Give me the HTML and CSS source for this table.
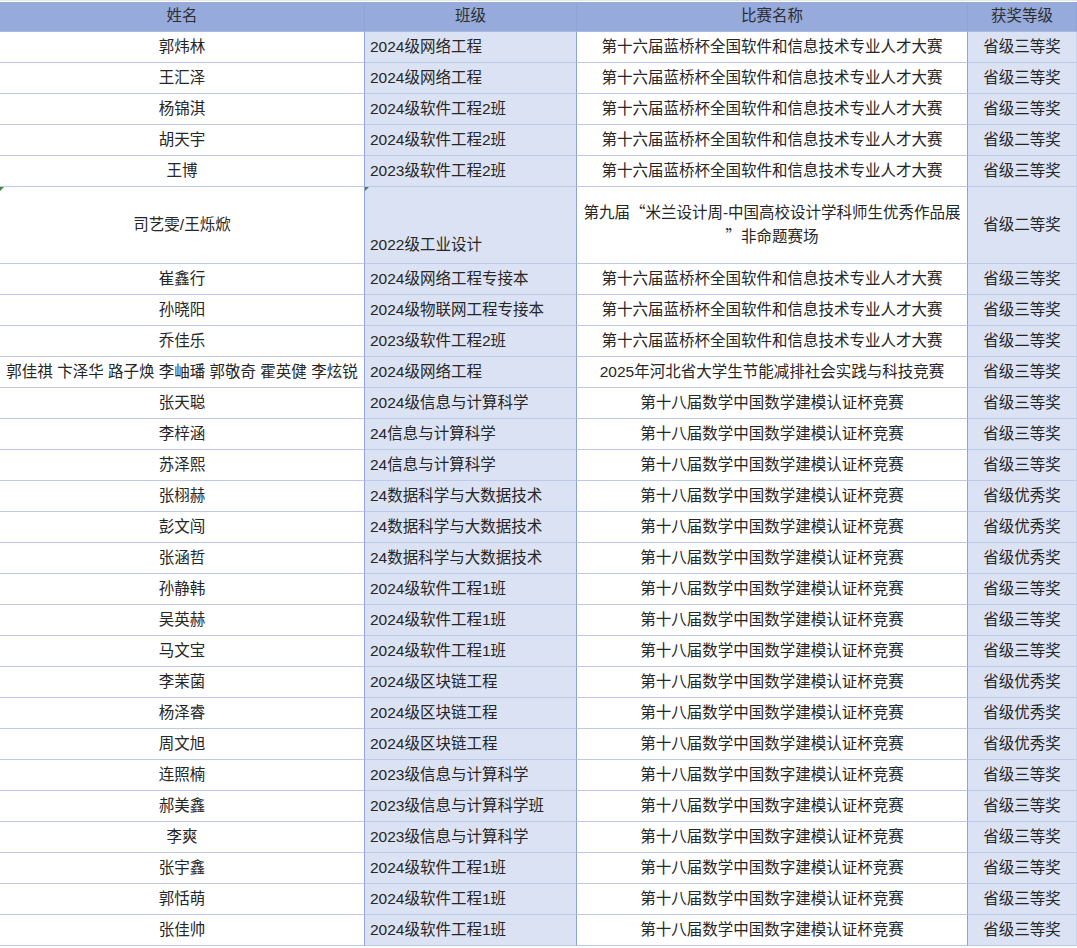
FILE: index.html
```html
<!DOCTYPE html>
<html lang="zh">
<head>
<meta charset="utf-8">
<title>获奖名单</title>
<link rel="stylesheet" href="styles.css">
</head>
<body>
<div class="sheet">
  <div class="cell head">姓名</div>
  <div class="cell head">班级</div>
  <div class="cell head">比赛名称</div>
  <div class="cell head">获奖等级</div>

  <div class="cell name">郭炜林</div><div class="cell cls">2024级网络工程</div><div class="cell comp">第十六届蓝桥杯全国软件和信息技术专业人才大赛</div><div class="cell award">省级三等奖</div>
  <div class="cell name">王汇泽</div><div class="cell cls">2024级网络工程</div><div class="cell comp">第十六届蓝桥杯全国软件和信息技术专业人才大赛</div><div class="cell award">省级三等奖</div>
  <div class="cell name">杨锦淇</div><div class="cell cls">2024级软件工程2班</div><div class="cell comp">第十六届蓝桥杯全国软件和信息技术专业人才大赛</div><div class="cell award">省级三等奖</div>
  <div class="cell name">胡天宇</div><div class="cell cls">2024级软件工程2班</div><div class="cell comp">第十六届蓝桥杯全国软件和信息技术专业人才大赛</div><div class="cell award">省级二等奖</div>
  <div class="cell name">王博</div><div class="cell cls">2023级软件工程2班</div><div class="cell comp">第十六届蓝桥杯全国软件和信息技术专业人才大赛</div><div class="cell award">省级三等奖</div>

  <div class="cell name tall marked">司艺雯/王烁焮</div><div class="cell cls tall bottom marked">2022级工业设计</div><div class="cell comp tall"><span class="wrap">第九届<span class="q">“</span>米兰设计周-中国高校设计学科师生优秀作品展<br><span class="q">”</span>非命题赛场</span></div><div class="cell award tall">省级二等奖</div>

  <div class="cell name">崔鑫行</div><div class="cell cls">2024级网络工程专接本</div><div class="cell comp">第十六届蓝桥杯全国软件和信息技术专业人才大赛</div><div class="cell award">省级三等奖</div>
  <div class="cell name">孙晓阳</div><div class="cell cls">2024级物联网工程专接本</div><div class="cell comp">第十六届蓝桥杯全国软件和信息技术专业人才大赛</div><div class="cell award">省级三等奖</div>
  <div class="cell name">乔佳乐</div><div class="cell cls">2023级软件工程2班</div><div class="cell comp">第十六届蓝桥杯全国软件和信息技术专业人才大赛</div><div class="cell award">省级二等奖</div>
  <div class="cell name">郭佳祺 卞泽华 路子焕 李岫璠 郭敬奇 霍英健 李炫锐</div><div class="cell cls">2024级网络工程</div><div class="cell comp">2025年河北省大学生节能减排社会实践与科技竞赛</div><div class="cell award">省级三等奖</div>
  <div class="cell name">张天聪</div><div class="cell cls">2024级信息与计算科学</div><div class="cell comp">第十八届数学中国数学建模认证杯竞赛</div><div class="cell award">省级三等奖</div>
  <div class="cell name">李梓涵</div><div class="cell cls">24信息与计算科学</div><div class="cell comp">第十八届数学中国数学建模认证杯竞赛</div><div class="cell award">省级三等奖</div>
  <div class="cell name">苏泽熙</div><div class="cell cls">24信息与计算科学</div><div class="cell comp">第十八届数学中国数学建模认证杯竞赛</div><div class="cell award">省级三等奖</div>
  <div class="cell name">张栩赫</div><div class="cell cls">24数据科学与大数据技术</div><div class="cell comp">第十八届数学中国数学建模认证杯竞赛</div><div class="cell award">省级优秀奖</div>
  <div class="cell name">彭文闯</div><div class="cell cls">24数据科学与大数据技术</div><div class="cell comp">第十八届数学中国数学建模认证杯竞赛</div><div class="cell award">省级优秀奖</div>
  <div class="cell name">张涵哲</div><div class="cell cls">24数据科学与大数据技术</div><div class="cell comp">第十八届数学中国数学建模认证杯竞赛</div><div class="cell award">省级优秀奖</div>
  <div class="cell name">孙静韩</div><div class="cell cls">2024级软件工程1班</div><div class="cell comp">第十八届数学中国数学建模认证杯竞赛</div><div class="cell award">省级三等奖</div>
  <div class="cell name">吴英赫</div><div class="cell cls">2024级软件工程1班</div><div class="cell comp">第十八届数学中国数学建模认证杯竞赛</div><div class="cell award">省级三等奖</div>
  <div class="cell name">马文宝</div><div class="cell cls">2024级软件工程1班</div><div class="cell comp">第十八届数学中国数学建模认证杯竞赛</div><div class="cell award">省级三等奖</div>
  <div class="cell name">李茉菌</div><div class="cell cls">2024级区块链工程</div><div class="cell comp">第十八届数学中国数学建模认证杯竞赛</div><div class="cell award">省级优秀奖</div>
  <div class="cell name">杨泽睿</div><div class="cell cls">2024级区块链工程</div><div class="cell comp">第十八届数学中国数学建模认证杯竞赛</div><div class="cell award">省级优秀奖</div>
  <div class="cell name">周文旭</div><div class="cell cls">2024级区块链工程</div><div class="cell comp">第十八届数学中国数学建模认证杯竞赛</div><div class="cell award">省级优秀奖</div>
  <div class="cell name">连照楠</div><div class="cell cls">2023级信息与计算科学</div><div class="cell comp">第十八届数学中国数字建模认证杯竞赛</div><div class="cell award">省级三等奖</div>
  <div class="cell name">郝美鑫</div><div class="cell cls">2023级信息与计算科学班</div><div class="cell comp">第十八届数学中国数字建模认证杯竞赛</div><div class="cell award">省级三等奖</div>
  <div class="cell name">李爽</div><div class="cell cls">2023级信息与计算科学</div><div class="cell comp">第十八届数学中国数字建模认证杯竞赛</div><div class="cell award">省级三等奖</div>
  <div class="cell name">张宇鑫</div><div class="cell cls">2024级软件工程1班</div><div class="cell comp">第十八届数学中国数字建模认证杯竞赛</div><div class="cell award">省级三等奖</div>
  <div class="cell name">郭恬萌</div><div class="cell cls">2024级软件工程1班</div><div class="cell comp">第十八届数学中国数字建模认证杯竞赛</div><div class="cell award">省级三等奖</div>
  <div class="cell name">张佳帅</div><div class="cell cls">2024级软件工程1班</div><div class="cell comp">第十八届数学中国数字建模认证杯竞赛</div><div class="cell award">省级三等奖</div>
</div>
</body>
</html>
```

FILE: styles.css
```css
html, body {
  margin: 0;
  padding: 0;
  background: #ffffff;
}

body {
  font-family: "Liberation Sans", "Noto Sans CJK SC", sans-serif;
  font-size: 15.5px;
  color: #262626;
  padding-top: 1px;
  border-top: 1px solid #e4e6ea;
}

.sheet {
  display: grid;
  grid-template-columns: 365px 212px 391px 109px;
  width: 1077px;
}

.cell {
  box-sizing: border-box;
  height: 31px;
  display: flex;
  align-items: center;
  justify-content: center;
  border-bottom: 1px solid #bcc9ea;
  border-right: 1px solid #8ea4d8;
  white-space: nowrap;
  position: relative;
  line-height: 1.2;
}

.head {
  background: #96aadc;
  color: #2e2e2e;
  height: 30px;
  border-bottom: 1px solid #aab9e2;
}

.name {
  background: #ffffff;
}

.cls {
  background: #dbe2f3;
  justify-content: flex-start;
  padding-left: 5px;
}

.comp {
  background: #ffffff;
}

.award {
  background: #dbe2f3;
  border-right-color: #c9d3ee;
}

.tall {
  height: 77px;
  white-space: normal;
  text-align: center;
}

.wrap {
  line-height: 22px;
  padding-bottom: 2px;
}

.q {
  font-family: "Noto Sans CJK SC", sans-serif;
  display: inline-block;
  width: 1em;
  text-align: center;
}

.bottom {
  align-items: flex-end;
  padding-bottom: 8px;
}

.marked::before {
  content: "";
  position: absolute;
  left: 0;
  top: 0;
  border-top: 4px solid #3a8a3a;
  border-right: 4px solid transparent;
}
```
